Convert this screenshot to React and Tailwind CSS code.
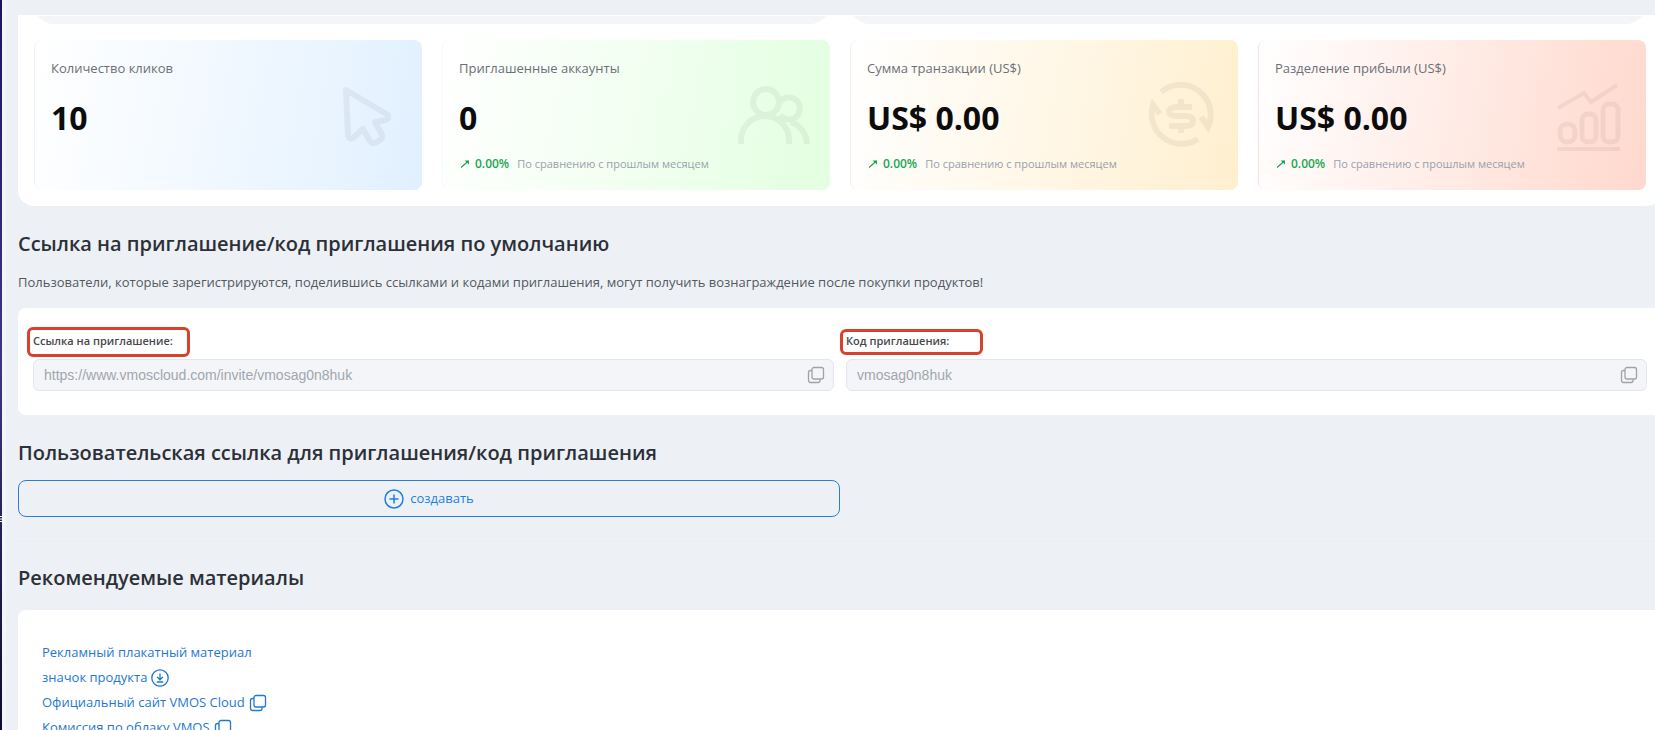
import React from 'react';

const comparison = 'По сравнению с прошлым месяцем';

const stats = [
  {
    label: 'Количество кликов',
    value: '10',
    card: 'from-white to-[#e1f0ff] border-l-[#f1f1f6]',
    Icon: CursorIcon,
  },
  {
    label: 'Приглашенные аккаунты',
    value: '0',
    change: '0.00%',
    card: 'from-white to-[#e3ffe1] border-l-[#f4faf5]',
    Icon: UsersIcon,
  },
  {
    label: 'Сумма транзакции (US$)',
    value: 'US$ 0.00',
    change: '0.00%',
    card: 'from-white to-[#ffefcf] border-l-[#f9ece8]',
    Icon: CurrencyIcon,
  },
  {
    label: 'Разделение прибыли (US$)',
    value: 'US$ 0.00',
    change: '0.00%',
    card: 'from-white to-[#ffd8cd] border-l-[#fadfe2]',
    Icon: ChartIcon,
  },
];

const materials = [
  { label: 'Рекламный плакатный материал' },
  { label: 'значок продукта', Icon: DownloadIcon },
  { label: 'Официальный сайт VMOS Cloud', Icon: CopyIcon },
  { label: 'Комиссия по облаку VMOS', Icon: CopyIcon },
];

function CursorIcon() {
  return (
    <svg viewBox="0 0 72 72" className="w-18 h-18" fill="none" stroke="currentColor" strokeWidth="6" strokeLinejoin="round">
      <path d="M16 11 L58 36 Q59 40 56 41 L45 43 L52 56 Q53 59 50 61 L45 64 Q42 65 40 62 L33 50 L23 59 Q19 61 18 56 Z" />
    </svg>
  );
}

function UsersIcon() {
  return (
    <svg viewBox="0 0 72 72" className="w-18 h-18" fill="none" stroke="currentColor" strokeWidth="6">
      <path d="M42 23 A11 11 0 1 1 42 36 M28 10 A13 13 0 1 0 28 36 A13 13 0 1 0 28 10 M3 65 V61 A24 24 0 0 1 51 61 V65 M53 43 Q68 49 69 65" />
    </svg>
  );
}

function CurrencyIcon() {
  return (
    <svg viewBox="0 0 72 72" className="w-18 h-18" fill="none" stroke="currentColor" strokeWidth="6">
      <path d="M15 13 A30 30 0 0 1 62 48 L55 38 M52 60 A30 30 0 0 1 7 26 L14 35" />
      <path d="M46 28 H31 Q23 28 23 33 Q23 37 31 37 H39 Q47 37 47 42 Q47 47 39 47 H23 M35 20 V28 M35 47 V54" />
    </svg>
  );
}

function ChartIcon() {
  return (
    <svg viewBox="0 0 72 72" className="w-18 h-18" fill="none" stroke="currentColor" strokeWidth="5">
      <path d="M4 29 L30 14 L37 23 L63 6" strokeWidth="4" />
      <rect x="6" y="45" width="15" height="18" rx="7" />
      <rect x="28" y="35" width="14" height="28" rx="6" />
      <rect x="49" y="25" width="15" height="38" rx="6" />
      <path d="M3 70 H66" strokeWidth="4" />
    </svg>
  );
}

function CopyIcon() {
  return (
    <svg viewBox="0 0 18 18" className="w-[18px] h-[18px]" fill="none" stroke="currentColor" strokeWidth="1.3">
      <rect x="5" y="1.5" width="11.5" height="11.5" rx="2" />
      <path d="M5 4.5 H3.5 Q1.5 4.5 1.5 6.5 V14 Q1.5 16.5 3.5 16.5 H11 Q13 16.5 13 14.5 V13" />
    </svg>
  );
}

function DownloadIcon() {
  return (
    <svg viewBox="0 0 18 18" className="w-[18px] h-[18px]" fill="none" stroke="currentColor" strokeWidth="1.3">
      <circle cx="9" cy="9" r="8.2" />
      <path d="M9 4.5 V10.5 M6.2 8 L9 10.8 L11.8 8 M5.8 13 H12.2" />
    </svg>
  );
}

function PlusIcon() {
  return (
    <svg viewBox="0 0 20 20" className="w-5 h-5" fill="none" stroke="currentColor" strokeWidth="1.5">
      <circle cx="10" cy="10" r="9" />
      <path d="M10 5.5 V14.5 M5.5 10 H14.5" />
    </svg>
  );
}

function StatCard({ label, value, change, card, Icon }) {
  return (
    <div className={`flex items-center justify-between h-[150px] pl-4 pr-5 rounded-lg border-l bg-linear-100 ${card}`}>
      <div className="self-stretch pt-4">
        <div className="text-[13px] leading-6 text-[#6b7078]">{label}</div>
        <div className="mt-[18px] text-[32px] leading-10 font-bold text-[#0c0c0c]">{value}</div>
        {change && (
          <div className="mt-4 flex items-center gap-2 text-xs leading-5">
            <span className="flex items-center gap-1 font-semibold text-[#1aa551]">
              <svg viewBox="0 0 12 12" className="w-3 h-3" fill="none" stroke="currentColor" strokeWidth="1.2">
                <path d="M2 9.5 L9.5 3" />
                <path d="M5.5 2.5 H10 V6.5 Z" fill="currentColor" stroke="none" />
              </svg>
              {change}
            </span>
            <span className="text-[11px] text-[#9a9fac]">{comparison}</span>
          </div>
        )}
      </div>
      <div className="text-black/5">
        <Icon />
      </div>
    </div>
  );
}

function SectionTitle({ children }) {
  return <h2 className="text-xl leading-8 font-semibold text-[#2c3038]">{children}</h2>;
}

function CopyField({ id, label, value, frame }) {
  return (
    <div className="flex flex-col">
      <div className="h-[35px] flex items-center">
        <label htmlFor={id} className={`flex items-center -ml-1.5 pl-[3px] rounded-md border-3 border-[#d8412b] text-[11px] font-semibold text-[#45484d] ${frame}`}>
          {label}
        </label>
      </div>
      <div className="flex items-center h-8 pl-2.5 pr-2 rounded-md border border-[#e4e6ee] bg-[#f4f5f9]">
        <input
          id={id}
          readOnly
          value={value}
          className="flex-1 min-w-0 bg-transparent outline-none font-['Liberation_Sans',sans-serif] text-sm text-[#a1a6ad]"
        />
        <button type="button" aria-label="Копировать" className="text-[#a0a2a6]">
          <CopyIcon />
        </button>
      </div>
    </div>
  );
}

export default function App() {
  return (
    <div className="flex h-screen overflow-hidden bg-[#edf1f5] font-['Open_Sans',sans-serif]">
      <div className="w-0.5 shrink-0 bg-linear-to-b from-[#1b1464] via-[#3f367f] to-[#0e0b33]">
        <svg viewBox="0 0 5 6" className="relative top-[516px] w-[5px] h-1.5 max-w-none" stroke="white">
          <path d="M0 0.5 H5 M0 3 H4 M0 5.5 H5" />
        </svg>
      </div>
      <div className="w-1 shrink-0 bg-[#f2f5fa]" />
      <main className="flex-1 min-w-0 pl-3 -mr-[7px]">
        <section className="mt-[15px] px-4 pt-px pb-4 rounded-b-2xl bg-white">
          <div className="grid grid-cols-2 gap-5">
            {[0, 1].map((i) => (
              <div key={i} className="flex items-end h-2 overflow-hidden">
                <div className="w-full h-10 shrink-0 rounded-[20px] bg-[#f4f5f9]" />
              </div>
            ))}
          </div>
          <div className="mt-4 grid grid-cols-4 gap-5">
            {stats.map((s) => (
              <StatCard key={s.label} {...s} />
            ))}
          </div>
        </section>

        <div className="mt-[22px]">
          <SectionTitle>Ссылка на приглашение/код приглашения по умолчанию</SectionTitle>
        </div>
        <p className="mt-2.5 text-[13px] leading-6 text-[#54585f]">
          Пользователи, которые зарегистрируются, поделившись ссылками и кодами приглашения, могут получить вознаграждение после покупки продуктов!
        </p>
        <section className="mt-[14px] px-[15px] pt-4 pb-6 grid grid-cols-2 gap-3 rounded-lg bg-white">
          <CopyField id="invite-link" label="Ссылка на приглашение:" value="https://www.vmoscloud.com/invite/vmosag0n8huk" frame="w-[163px] h-[30px]" />
          <CopyField id="invite-code" label="Код приглашения:" value="vmosag0n8huk" frame="w-[143px] h-[26px]" />
        </section>

        <div className="mt-[22px]">
          <SectionTitle>Пользовательская ссылка для приглашения/код приглашения</SectionTitle>
        </div>
        <button type="button" className="mt-[11px] w-1/2 h-[37px] flex items-center justify-center gap-1.5 rounded-lg border border-[#2a7fd4] text-[13px] text-[#1f7fe0]">
          <PlusIcon />
          создавать
        </button>

        <div className="mt-6 border-t border-[#ebeef1] pt-5">
          <SectionTitle>Рекомендуемые материалы</SectionTitle>
        </div>
        <section className="mt-4 px-6 pt-[30px] pb-6 rounded-lg bg-white">
          <ul className="text-[13px] text-[#1f78d1]">
            {materials.map(({ label, Icon }) => (
              <li key={label} className="h-[25px]">
                <a href="#" className="inline-flex items-center gap-1 leading-[25px]">
                  {label}
                  {Icon && <Icon />}
                </a>
              </li>
            ))}
          </ul>
        </section>
      </main>
    </div>
  );
}
